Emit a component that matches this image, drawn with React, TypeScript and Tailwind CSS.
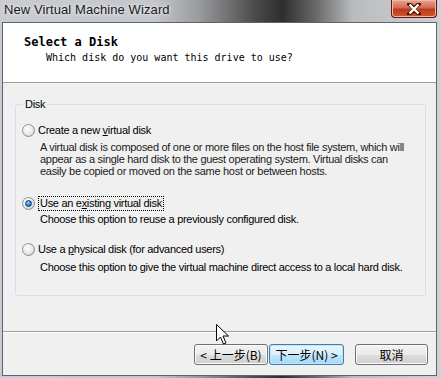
import React from "react";

function Radio({ checked }: { checked?: boolean }) {
  return (
    <span className="relative flex items-center justify-center w-[13px] h-[13px] rounded-full border border-[#8f8f8f] bg-[radial-gradient(circle_at_40%_35%,#ffffff_0%,#f4f4f4_35%,#d4d4d4_75%,#c4c4c4_100%)] shrink-0">
      {checked ? (
        <span className="w-[7px] h-[7px] rounded-full bg-[radial-gradient(circle_at_40%_35%,#a6d8ff_0%,#3b8fd6_45%,#0b4e96_100%)] border border-[#0f3f74]" />
      ) : (
        <span className="w-[9px] h-[9px] rounded-full bg-[radial-gradient(circle_at_40%_35%,#fdfdfd_0%,#e9e9e9_60%,#d0d0d0_100%)]" />
      )}
    </span>
  );
}

function Btn({ children, def }: { children: React.ReactNode; def?: boolean }) {
  return (
    <div
      className={
        "flex items-center justify-center h-[21px] rounded-[3px] border text-[12px] leading-none font-['Noto_Sans_CJK_SC',sans-serif] text-black " +
        (def
          ? "border-[#3c7fb1] bg-[linear-gradient(#eaf6fd_0%,#d9f0fc_50%,#bee6fd_51%,#a7d9f5_100%)] shadow-[inset_0_0_0_1px_#c3e3f8]"
          : "border-[#707070] bg-[linear-gradient(#f2f2f2_0%,#ebebeb_50%,#dddddd_51%,#cfcfcf_100%)] shadow-[inset_0_0_0_1px_#fbfbfb]")
      }
    >
      {children}
    </div>
  );
}

export default function App() {
  return (
    <div className="relative w-[441px] h-[378px] overflow-hidden flex flex-col pl-[2px] pr-[4px] pb-[2px] bg-[linear-gradient(90deg,#c8cbcf_0%,#c3c6ca_35%,#9a9b9d_45%,#4a4a4a_58%,#2e2e2e_64%,#6c6c6c_72%,#b9bbbd_80%,#cfd1d4_100%)] font-['Liberation_Sans',Arial,sans-serif]">
      {/* title bar */}
      <div className="h-[22px] flex items-start justify-between shrink-0">
        <div className="pl-[2px] pt-[2px] text-[13px] leading-[16px] text-[#1a1a1a] font-['Liberation_Sans',sans-serif] tracking-[0.1px] [text-shadow:0_0_6px_#e8e8e8,0_0_3px_#f0f0f0]">
          New Virtual Machine Wizard
        </div>
        <div className="w-[46px] h-[18px] rounded-b-[4px] border border-t-0 border-[#5a1a10] bg-[linear-gradient(#e8a493_0%,#d36b52_45%,#c0381d_55%,#d0582f_100%)] shadow-[inset_0_0_0_1px_#f0b9a8] flex items-center justify-center">
          <svg width="14" height="12" viewBox="0 0 14 12">
            <path d="M2 1 L7 5 L12 1 M2 11 L7 7 L12 11" fill="none" stroke="#3d1208" strokeWidth="4" strokeLinecap="square" />
            <path d="M2.5 1.5 L11.5 10.5 M11.5 1.5 L2.5 10.5" fill="none" stroke="#ffffff" strokeWidth="2.4" />
          </svg>
        </div>
      </div>

      {/* client area */}
      <div className="flex-1 flex flex-col border border-[#5b6570] bg-[#f0f0f0]">
        {/* header */}
        <div className="h-[60px] shrink-0 bg-white border-b border-[#a0a0a0] pl-[21px] pt-[11px] font-['DejaVu_Sans_Mono','Liberation_Mono',monospace] text-black">
          <div className="text-[12px] leading-[16px] font-bold">Select a Disk</div>
          <div className="text-[10px] leading-[14px] pl-[22px] mt-[1px]">Which disk do you want this drive to use?</div>
        </div>

        {/* body */}
        <div className="flex-1 pt-[15px] pl-[12px] pr-[10px] text-[11px] text-black tracking-[-0.3px]">
          <fieldset className="h-[198px] border border-[#d5dfe5] rounded-[3px] pl-[6px] pr-[6px]">
            <legend className="ml-[1px] px-[2px] leading-[13px]">Disk</legend>

            <div className="mt-[11px] h-[16px] flex items-center gap-[3px]">
              <Radio />
              <span className="leading-[13px]">
                Create a new <span className="underline underline-offset-1">v</span>irtual disk
              </span>
            </div>
            <div className="ml-[18px] mt-[3px] leading-[12px] text-[#1b1b1b]">
              A virtual disk is composed of one or more files on the host file system, which will
              <br />
              appear as a single hard disk to the guest operating system. Virtual disks can
              <br />
              easily be copied or moved on the same host or between hosts.
            </div>

            <div className="mt-[18px] h-[16px] flex items-center gap-[3px]">
              <Radio checked />
              <span className="leading-[13px] border border-dotted border-black px-[1px]">
                Use an e<span className="underline underline-offset-1">x</span>isting virtual disk
              </span>
            </div>
            <div className="ml-[18px] mt-[2px] leading-[13px]">
              Choose this option to reuse a previously configured disk.
            </div>

            <div className="mt-[15px] h-[16px] flex items-center gap-[3px]">
              <Radio />
              <span className="leading-[13px]">
                Use a <span className="underline underline-offset-1">p</span>hysical disk (for advanced users)
              </span>
            </div>
            <div className="ml-[18px] mt-[4px] leading-[13px]">
              Choose this option to give the virtual machine direct access to a local hard disk.
            </div>
          </fieldset>
        </div>

        {/* separator */}
        <div className="shrink-0 border-t border-[#a0a0a0] border-b border-b-white" />

        {/* buttons */}
        <div className="shrink-0 h-[42px] flex items-start pt-[11px] pr-[8px] justify-end">
          <div className="w-[74px]">
            <Btn>&lt; 上一步(B)</Btn>
          </div>
          <div className="w-[75px] ml-[1px]">
            <Btn def>下一步(N) &gt;</Btn>
          </div>
          <div className="w-[73px] ml-[11px]">
            <Btn>取消</Btn>
          </div>
        </div>
      </div>

      {/* mouse cursor */}
      <svg className="absolute left-[216px] top-[324px]" width="14" height="22" viewBox="0 0 14 22">
        <path d="M0.5 0.5 L0.5 17 L4.5 13 L7.5 20 L10 19 L7 12 L12.5 12 Z" fill="#ffffff" stroke="#000000" strokeWidth="1" strokeLinejoin="miter" />
      </svg>
    </div>
  );
}
